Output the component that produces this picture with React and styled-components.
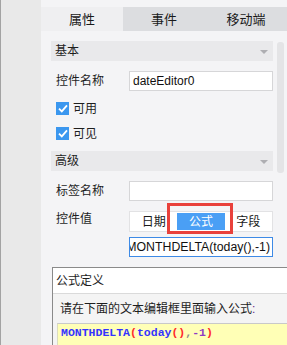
import React from "react";
import styled, { createGlobalStyle } from "styled-components";

const GlobalStyle = createGlobalStyle`
  html, body {
    margin: 0;
    padding: 0;
    overflow: hidden;
  }
  body {
    font-family: "Liberation Sans", "Noto Sans CJK SC", sans-serif;
    font-size: 12px;
    color: #1e1e1e;
  }
`;

const Screen = styled.div`
  display: flex;
  width: 287px;
  height: 345px;
  overflow: hidden;
`;
const SideStrip = styled.div`
  width: 40px;
  flex-shrink: 0;
  background: #e9e9e9;
  border-left: 1px solid #a3a3a3;
`;
const Panel = styled.div`
  flex: 1;
  display: flex;
  flex-direction: column;
  background: #f4f4f6;
  padding-top: 7px;
  min-width: 0;
  overflow: hidden;
`;
const Tabs = styled.div`
  display: flex;
  height: 24px;
  flex-shrink: 0;
`;
const Tab = styled.div`
  flex: 1;
  display: flex;
  align-items: center;
  justify-content: center;
  font-size: 13px;
  line-height: 1;
  color: #1a1a1a;
  background: ${props => (props.$active ? "#efeff1" : "#dcdde0")};
`;
const Body = styled.div`
  display: flex;
  flex-shrink: 0;
  padding: 10px 0 0 10px;
`;
const Column = styled.div`
  width: 222px;
  flex-shrink: 0;
  display: flex;
  flex-direction: column;
`;
const Scrollbar = styled.div`
  width: 7px;
  height: 131px;
  margin: 1px 0 0 4px;
  border-radius: 3px;
  background: #e4e4e6;
`;
const SectionHeader = styled.div`
  height: 20px;
  flex-shrink: 0;
  display: flex;
  align-items: center;
  justify-content: space-between;
  padding: 0 5px 0 4px;
  margin-top: ${props => props.$gap || 0}px;
  background: #e9e9eb;
  font-size: 12px;
  line-height: 1;
`;
const Caret = styled.span`
  width: 0;
  height: 0;
  border-left: 4px solid transparent;
  border-right: 4px solid transparent;
  border-top: 4px solid #aeaeb2;
  margin-top: 2px;
`;
const FieldRow = styled.div`
  display: flex;
  align-items: ${props => (props.$top ? "flex-start" : "center")};
  margin-top: ${props => props.$gap || 10}px;
`;
const Label = styled.div`
  width: 73px;
  padding-left: 5px;
  flex-shrink: 0;
  line-height: 14px;
  padding-top: ${props => (props.$top ? 1 : 0)}px;
`;
const TextBox = styled.div`
  flex: 1;
  height: 20px;
  box-sizing: border-box;
  display: flex;
  align-items: center;
  justify-content: ${props => (props.$focused ? "flex-end" : "flex-start")};
  padding: 0 ${props => (props.$focused ? 2 : 3)}px;
  overflow: hidden;
  white-space: nowrap;
  background: #fff;
  border: 1px solid ${props => (props.$focused ? "#3d8ae6" : "#d6d6d8")};
  color: #101010;
  font-size: ${props => (props.$focused ? 12.3 : 12)}px;
`;
const CheckRow = styled.div`
  height: 25px;
  display: flex;
  align-items: center;
  gap: 4px;
  padding-left: 5px;
  margin-top: ${props => props.$gap || 0}px;
  line-height: 1;
`;
const Box = styled.span`
  width: 13px;
  height: 13px;
  display: flex;
  align-items: center;
  justify-content: center;
  background: #3b97ef;
`;
const Segmented = styled.div`
  flex: 1;
  display: flex;
  height: 21px;
  box-sizing: border-box;
  padding: 1px 0;
  background: #fff;
  border: 1px solid #e2e2e4;
`;
const Segment = styled.div`
  position: relative;
  flex: 1;
  display: flex;
  align-items: center;
  justify-content: center;
  font-size: 12px;
  line-height: 1;
  background: ${props => (props.$active ? "#4a9ff5" : "transparent")};
  color: ${props => (props.$active ? "#fff" : "#1a1a1a")};
`;
const Highlight = styled.div`
  position: absolute;
  left: -10px;
  right: -8px;
  top: -10px;
  bottom: -4px;
  border: 3px solid #e9413b;
`;
const Dialog = styled.div`
  width: 260px;
  margin: 10px 0 0 1px;
  border-top: 1px solid #8a8a8a;
  border-left: 1px solid #8a8a8a;
  display: flex;
  flex-direction: column;
`;
const DialogTitle = styled.div`
  height: 25px;
  display: flex;
  align-items: center;
  padding-left: 3px;
  background: #fff;
  border-bottom: 1px solid #dadada;
  line-height: 1;
`;
const DialogBody = styled.div`
  background: #f4f4f4;
  padding: 5px 0 0 4px;
`;
const Hint = styled.div`
  padding-left: 3px;
  height: 19px;
  display: flex;
  align-items: center;
  line-height: 1;
`;
const Colon = styled.span`
  color: #6a2a8a;
`;
const Editor = styled.div`
  margin-top: 5px;
  height: 40px;
  padding: 2px 0 0 3px;
  background: #ffffb6;
  border-top: 1px solid #c9c9c9;
  border-left: 1px solid #dcdcc0;
  font-family: "Liberation Mono", "DejaVu Sans Mono", monospace;
  font-size: 11.5px;
  font-weight: bold;
  line-height: 14px;
  white-space: nowrap;
`;
const Tok = styled.span`
  color: ${props => props.$c};
`;

const Check = () =>
  <Box>
    <svg width="10" height="9" viewBox="0 0 10 9">
      <path d="M1 4.6 L3.8 7.4 L9 1.4" fill="none" stroke="#fff" strokeWidth="1.8" />
    </svg>
  </Box>;

const App = () =>
  <Screen>
    <GlobalStyle />
    <SideStrip />
    <Panel>
      <Tabs>
        <Tab $active>属性</Tab>
        <Tab>事件</Tab>
        <Tab>移动端</Tab>
      </Tabs>
      <Body>
        <Column>
          <SectionHeader>
            基本<Caret />
          </SectionHeader>
          <FieldRow>
            <Label>控件名称</Label>
            <TextBox>dateEditor0</TextBox>
          </FieldRow>
          <CheckRow $gap={5}>
            <Check />可用
          </CheckRow>
          <CheckRow>
            <Check />可见
          </CheckRow>
          <SectionHeader $gap={5}>
            高级<Caret />
          </SectionHeader>
          <FieldRow>
            <Label>标签名称</Label>
            <TextBox />
          </FieldRow>
          <FieldRow $top>
            <Label $top>控件值</Label>
            <Segmented>
              <Segment>日期</Segment>
              <Segment $active>
                公式
                <Highlight />
              </Segment>
              <Segment>字段</Segment>
            </Segmented>
          </FieldRow>
          <FieldRow $gap={5}>
            <Label />
            <TextBox $focused>MONTHDELTA(today(),-1)</TextBox>
          </FieldRow>
          <Dialog>
            <DialogTitle>公式定义</DialogTitle>
            <DialogBody>
              <Hint>
                请在下面的文本编辑框里面输入公式<Colon>:</Colon>
              </Hint>
              <Editor>
                <Tok $c="#3434ff">MONTHDELTA</Tok>
                <Tok $c="#ff2a2a">(</Tok>
                <Tok $c="#3434ff">today</Tok>
                <Tok $c="#ff2a2a">()</Tok>
                <Tok $c="#8a8a8a">,</Tok>
                <Tok $c="#8e3bc4">-1</Tok>
                <Tok $c="#ff2a2a">)</Tok>
              </Editor>
            </DialogBody>
          </Dialog>
        </Column>
        <Scrollbar />
      </Body>
    </Panel>
  </Screen>;

export default App;
